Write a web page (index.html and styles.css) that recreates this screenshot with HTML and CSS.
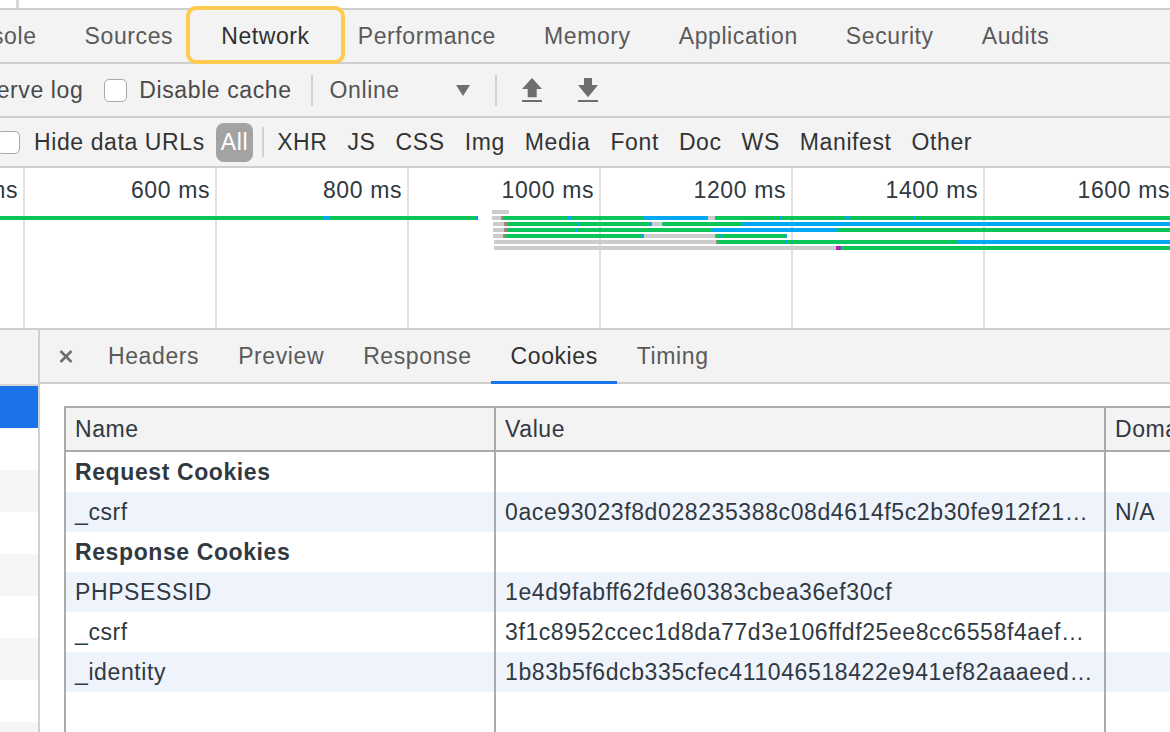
FILE: index.html
```html
<!DOCTYPE html>
<html>
<head>
<meta charset="utf-8">
<title>Network</title>
<link rel="stylesheet" href="styles.css">
</head>
<body>
<div class="top-strip"><span class="tick"></span></div>

<div class="tabbar">
  <div class="tabs">
    <span class="tab">Console</span>
    <span class="tab">Sources</span>
    <span class="tab active">Network</span>
    <span class="tab">Performance</span>
    <span class="tab">Memory</span>
    <span class="tab">Application</span>
    <span class="tab">Security</span>
    <span class="tab">Audits</span>
  </div>
</div>

<div class="toolbar">
  <span class="tb-text preserve">Preserve log</span>
  <span class="cb cb-disable"></span>
  <span class="tb-text cb-label">Disable cache</span>
  <span class="vsep sep1"></span>
  <div class="throttle"><span>Online</span><span class="tri"></span></div>
  <span class="vsep sep2"></span>
  <svg class="icon up" width="20" height="24" viewBox="0 0 20 24"><path d="M10 0 L20 11 L14.7 11 L14.7 19.3 L5.7 19.3 L5.7 11 L0 11 Z" fill="#6e6e6e"/><rect x="0" y="22" width="20" height="2" fill="#6e6e6e"/></svg>
  <svg class="icon down" width="20" height="24" viewBox="0 0 20 24"><path d="M6 0 L14 0 L14 7 L20 7 L10 19.3 L0 7 L6 7 Z" fill="#6e6e6e"/><rect x="0" y="22" width="20" height="2" fill="#6e6e6e"/></svg>
</div>

<div class="filterbar">
  <span class="cb cb-hide"></span>
  <span class="hide-label">Hide data URLs</span>
  <span class="pill">All</span>
  <span class="vsep fsep"></span>
  <span class="filter first">XHR</span>
  <span class="filter">JS</span>
  <span class="filter">CSS</span>
  <span class="filter">Img</span>
  <span class="filter">Media</span>
  <span class="filter">Font</span>
  <span class="filter">Doc</span>
  <span class="filter">WS</span>
  <span class="filter">Manifest</span>
  <span class="filter">Other</span>
</div>

<div class="timeline">
  <div class="divisions">
    <div class="division"><span class="tlabel">400 ms</span></div>
    <div class="division"><span class="tlabel">600 ms</span></div>
    <div class="division"><span class="tlabel">800 ms</span></div>
    <div class="division"><span class="tlabel">1000 ms</span></div>
    <div class="division"><span class="tlabel">1200 ms</span></div>
    <div class="division"><span class="tlabel">1400 ms</span></div>
    <div class="division"><span class="tlabel">1600 ms</span></div>
  </div>
  <div class="bars">
    <div class="brow">
      <span class="seg gap" style="width:492px"></span><span class="seg gr" style="width:17px"></span>
    </div>
    <div class="brow">
      <span class="seg g" style="width:324px"></span><span class="seg b" style="width:5px"></span><span class="seg g" style="width:146px"></span><span class="seg b" style="width:3px"></span><span class="seg gap" style="width:14px"></span><span class="seg gr" style="width:9px"></span><span class="seg br" style="width:2px"></span><span class="seg g" style="width:65px"></span><span class="seg b" style="width:3px"></span><span class="seg g" style="width:73px"></span><span class="seg b" style="width:64px"></span><span class="seg gr" style="width:7px"></span><span class="seg g" style="width:64px"></span><span class="seg b" style="width:3px"></span><span class="seg g" style="width:64px"></span><span class="seg b" style="width:4px"></span><span class="seg g" style="width:63px"></span><span class="seg b" style="width:3px"></span><span class="seg g" style="width:254px"></span>
    </div>
    <div class="brow">
      <span class="seg gap" style="width:493px"></span><span class="seg gr" style="width:11px"></span><span class="seg br" style="width:3px"></span><span class="seg g" style="width:70px"></span><span class="seg b" style="width:2px"></span><span class="seg g" style="width:71px"></span><span class="seg b" style="width:2px"></span><span class="seg gr" style="width:10px"></span><span class="seg g" style="width:79px"></span><span class="seg b" style="width:429px"></span>
    </div>
    <div class="brow">
      <span class="seg gap" style="width:493px"></span><span class="seg gr" style="width:11px"></span><span class="seg br" style="width:3px"></span><span class="seg g" style="width:69px"></span><span class="seg b" style="width:2px"></span><span class="seg g" style="width:133px"></span><span class="seg b" style="width:126px"></span><span class="seg g" style="width:333px"></span>
    </div>
    <div class="brow">
      <span class="seg gap" style="width:493px"></span><span class="seg gr" style="width:10px"></span><span class="seg br" style="width:2px"></span><span class="seg g" style="width:136px"></span><span class="seg b" style="width:3px"></span><span class="seg gr" style="width:71px"></span><span class="seg br" style="width:1px"></span><span class="seg g" style="width:4px"></span><span class="seg b" style="width:2px"></span><span class="seg g" style="width:63px"></span><span class="seg b" style="width:2px"></span>
    </div>
    <div class="brow">
      <span class="seg gap" style="width:494px"></span><span class="seg gr" style="width:222px"></span><span class="seg br" style="width:1px"></span><span class="seg g" style="width:68px"></span><span class="seg b" style="width:2px"></span><span class="seg g" style="width:170px"></span><span class="seg b" style="width:213px"></span>
    </div>
    <div class="brow">
      <span class="seg gap" style="width:494px"></span><span class="seg gr" style="width:342px"></span><span class="seg pu" style="width:5px"></span><span class="seg g" style="width:329px"></span>
    </div>
  </div>
</div>

<div class="lower">
  <div class="sidebar">
    <div class="sb-head"></div>
    <div class="sb-row sel"></div>
    <div class="sb-row"></div>
    <div class="sb-row alt"></div>
    <div class="sb-row"></div>
    <div class="sb-row alt"></div>
    <div class="sb-row"></div>
    <div class="sb-row alt"></div>
    <div class="sb-row"></div>
    <div class="sb-row alt"></div>
  </div>
  <div class="detail">
    <div class="dtabs">
      <span class="close"><svg width="14" height="13" viewBox="0 0 14 13"><path d="M1.5 1 L12.5 12 M12.5 1 L1.5 12" stroke="#6e6e6e" stroke-width="2.6" fill="none"/></svg></span>
      <span class="dtab">Headers</span>
      <span class="dtab">Preview</span>
      <span class="dtab">Response</span>
      <span class="dtab active">Cookies</span>
      <span class="dtab">Timing</span>
    </div>
    <div class="dcontent">
      <div class="ctable">
        <div class="c hc c1">Name</div><div class="c hc c2">Value</div><div class="c hc c3">Domain</div>

        <div class="c c1 grp">Request Cookies</div><div class="c c2"></div><div class="c c3"></div>
        <div class="c c1 stripe">_csrf</div><div class="c c2 stripe">0ace93023f8d028235388c08d4614f5c2b30fe912f21…</div><div class="c c3 stripe">N/A</div>

        <div class="c c1 grp">Response Cookies</div><div class="c c2"></div><div class="c c3"></div>
        <div class="c c1 stripe">PHPSESSID</div><div class="c c2 stripe">1e4d9fabff62fde60383cbea36ef30cf</div><div class="c c3 stripe"></div>
        <div class="c c1">_csrf</div><div class="c c2">3f1c8952ccec1d8da77d3e106ffdf25ee8cc6558f4aef…</div><div class="c c3"></div>
        <div class="c c1 stripe">_identity</div><div class="c c2 stripe">1b83b5f6dcb335cfec411046518422e941ef82aaaeed…</div><div class="c c3 stripe"></div>

        <div class="c c1 filler"></div><div class="c c2 filler"></div><div class="c c3 filler"></div>
      </div>
    </div>
  </div>
</div>
</body>
</html>
```

FILE: styles.css
```css
* { box-sizing: border-box; }

html, body {
  margin: 0;
  padding: 0;
}

body {
  width: 1170px;
  height: 732px;
  overflow: hidden;
  background: #ffffff;
  color: #333333;
  font-family: "Liberation Sans", Arial, sans-serif;
  font-size: 23px;
  letter-spacing: 0.6px;
}

/* top white strip */
.top-strip {
  height: 10px;
  display: flex;
  background: #ffffff;
  border-bottom: 2px solid #cfcfcf;
}
.tick {
  margin-left: 16px;
  width: 3px;
  height: 8px;
  background: #d8d8d8;
}

/* main panel tabs */
.tabbar {
  height: 54px;
  display: flex;
  background: #f3f3f3;
  border-bottom: 2px solid #cfcfcf;
}
.tabs {
  display: flex;
  margin-left: -76px;
}
.tab {
  position: relative;
  display: flex;
  align-items: center;
  padding: 0 24px;
  color: #5a5a5a;
  white-space: nowrap;
}
.tab.active { color: #303030; }
.tab.active::after {
  content: "";
  position: absolute;
  left: -11px;
  right: -11px;
  top: -4px;
  bottom: -2px;
  border: 4px solid #fecb4f;
  border-radius: 10px;
}

/* toolbar */
.toolbar {
  height: 54px;
  display: flex;
  align-items: center;
  background: #f3f3f3;
  border-bottom: 2px solid #cfcfcf;
  color: #4a4a4a;
  white-space: nowrap;
}
.preserve { margin-left: -53px; }
.cb {
  flex: none;
  width: 23px;
  height: 23px;
  background: #ffffff;
  border: 1.5px solid #a9a9a9;
  border-radius: 5px;
}
.cb-disable { margin-left: 21px; }
.cb-label { margin-left: 12px; }
.vsep {
  flex: none;
  width: 2px;
  height: 31px;
  background: #d2d2d2;
}
.sep1 { margin-left: 19px; }
.throttle {
  margin-left: 17px;
  width: 140px;
  display: flex;
  align-items: center;
  justify-content: space-between;
  color: #555555;
}
.tri {
  width: 0;
  height: 0;
  border-left: 7px solid transparent;
  border-right: 7px solid transparent;
  border-top: 11px solid #6e6e6e;
}
.sep2 { margin-left: 25px; }
.icon { flex: none; display: block; }
.up { margin-left: 25px; }
.down { margin-left: 36px; }

/* filter bar */
.filterbar {
  height: 50px;
  display: flex;
  align-items: center;
  background: #f3f3f3;
  border-bottom: 2px solid #cfcfcf;
  color: #333333;
  white-space: nowrap;
}
.cb-hide { margin-left: -3px; }
.hide-label { margin-left: 14px; }
.pill {
  margin-left: 11px;
  height: 39px;
  padding: 0 5px;
  display: flex;
  align-items: center;
  background: #a3a3a3;
  color: #ffffff;
  border-radius: 8px;
}
.fsep { margin-left: 9px; height: 30px; }
.filter { margin-left: 20px; }
.filter.first { margin-left: 13px; }

/* timeline overview */
.timeline {
  position: relative;
  height: 162px;
  background: #ffffff;
  border-bottom: 2px solid #cfcfcf;
  overflow: hidden;
}
.divisions {
  display: flex;
  height: 100%;
  margin-left: -167px;
}
.division {
  flex: 0 0 192px;
  height: 100%;
  border-right: 2px solid #e2e2e2;
  padding-right: 5px;
  text-align: right;
}
.tlabel {
  display: block;
  line-height: 44px;
  color: #303942;
  white-space: nowrap;
}
.bars {
  position: absolute;
  left: 0;
  top: 42px;
}
.brow {
  display: flex;
  height: 6px;
}
.seg {
  flex: none;
  height: 4px;
}
.seg.g { background: #0cc65a; }
.seg.b { background: #03a9f4; }
.seg.gr { background: #cccccc; }
.seg.br { background: #a1887f; }
.seg.pu { background: #9c27b0; }
.seg.gap { background: transparent; }

/* lower area */
.lower {
  height: 402px;
  display: flex;
  overflow: hidden;
}
.sidebar {
  flex: none;
  width: 40px;
  border-right: 2px solid #cfcfcf;
}
.sb-head {
  height: 56px;
  background: #f3f3f3;
  border-bottom: 2px solid #d8d8d8;
}
.sb-row { height: 42px; background: #ffffff; }
.sb-row.sel { background: #1a73e8; }
.sb-row.alt { background: #f5f5f5; }

.detail {
  flex: 1;
  min-width: 0;
  overflow: hidden;
}
.dtabs {
  height: 54px;
  display: flex;
  padding-left: 19px;
  background: #f3f3f3;
  border-bottom: 2px solid #cfcfcf;
  white-space: nowrap;
}
.close {
  display: flex;
  align-items: center;
  margin-right: 15.5px;
}
.dtab {
  position: relative;
  display: flex;
  align-items: center;
  padding: 0 19.5px;
  color: #5a5a5a;
}
.dtab.active { color: #303030; }
.dtab.active::after {
  content: "";
  position: absolute;
  left: 0;
  right: 0;
  bottom: -2px;
  height: 3px;
  background: #1a73e8;
}

.dcontent {
  padding: 22px 0 0 24px;
}
.ctable {
  display: grid;
  grid-template-columns: 430px 610px 200px;
  width: max-content;
  border-top: 2px solid #aaaaaa;
  border-left: 2px solid #aaaaaa;
  color: #303942;
}
.c {
  height: 40px;
  padding: 0 9px;
  display: flex;
  align-items: center;
  white-space: nowrap;
  overflow: hidden;
  background: #ffffff;
}
.c1, .c2 { border-right: 2px solid #aaaaaa; }
.hc {
  height: 44px;
  background: #f3f3f3;
  border-bottom: 2px solid #aaaaaa;
}
.grp { font-weight: bold; }
.stripe { background: #eef3fc; }
.filler { height: 80px; }
```
